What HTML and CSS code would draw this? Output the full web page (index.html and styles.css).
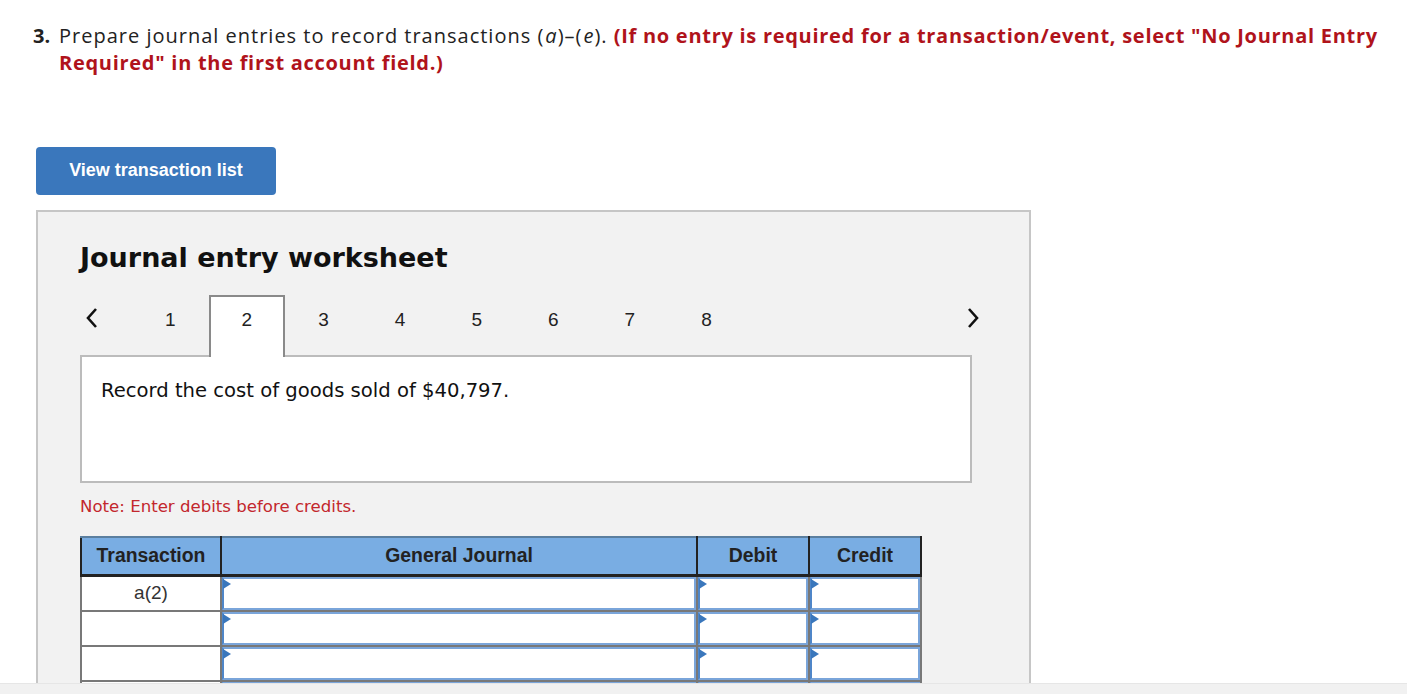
FILE: index.html
```html
<!DOCTYPE html>
<html>
<head>
<meta charset="utf-8">
<link rel="stylesheet" href="styles.css">
</head>
<body>
<div class="question">
  <span class="qnum">3.</span>
  <p class="qtext">Prepare journal entries to record transactions (<i>a</i>)–(<i>e</i>). <b class="warn">(If no entry is required for a transaction/event, select "No Journal Entry Required" in the first account field.)</b></p>
</div>

<button class="btn">View transaction list</button>

<section class="panel">
  <h2 class="panel-title">Journal entry worksheet</h2>

  <div class="tabs">
    <span class="arrow arrow-left">
      <svg width="14" height="22" viewBox="0 0 14 22"><path d="M11 2 L3 11 L11 20" fill="none" stroke="#111" stroke-width="2.6"/></svg>
    </span>
    <span class="tab">1</span>
    <span class="tab active">2</span>
    <span class="tab">3</span>
    <span class="tab">4</span>
    <span class="tab">5</span>
    <span class="tab">6</span>
    <span class="tab">7</span>
    <span class="tab">8</span>
    <span class="spacer"></span>
    <span class="arrow arrow-right">
      <svg width="14" height="22" viewBox="0 0 14 22"><path d="M3 2 L11 11 L3 20" fill="none" stroke="#111" stroke-width="2.6"/></svg>
    </span>
  </div>

  <div class="desc">Record the cost of goods sold of $40,797.</div>

  <p class="note">Note: Enter debits before credits.</p>

  <table class="journal">
    <thead>
      <tr>
        <th class="c-tr">Transaction</th>
        <th class="c-gj">General Journal</th>
        <th class="c-num">Debit</th>
        <th class="c-num">Credit</th>
      </tr>
    </thead>
    <tbody>
      <tr>
        <td class="tr">a(2)</td>
        <td class="in"><div class="box"></div></td>
        <td class="in"><div class="box"></div></td>
        <td class="in"><div class="box"></div></td>
      </tr>
      <tr>
        <td class="tr"></td>
        <td class="in"><div class="box"></div></td>
        <td class="in"><div class="box"></div></td>
        <td class="in"><div class="box"></div></td>
      </tr>
      <tr>
        <td class="tr"></td>
        <td class="in"><div class="box"></div></td>
        <td class="in"><div class="box"></div></td>
        <td class="in"><div class="box"></div></td>
      </tr>
      <tr>
        <td class="tr"></td>
        <td class="in"><div class="box"></div></td>
        <td class="in"><div class="box"></div></td>
        <td class="in"><div class="box"></div></td>
      </tr>
      <tr>
        <td class="tr"></td>
        <td class="in"><div class="box"></div></td>
        <td class="in"><div class="box"></div></td>
        <td class="in"><div class="box"></div></td>
      </tr>
    </tbody>
  </table>
</section>

<div class="bottom-strip"></div>
</body>
</html>
```

FILE: styles.css
```css
html, body {
  margin: 0;
  padding: 0;
  background: #fff;
  overflow: hidden;
}

body {
  padding: 22px 0 0 33px;
  font-family: "Open Sans", "Liberation Sans", sans-serif;
}

.question {
  display: flex;
  align-items: flex-start;
  width: 1356px;
  font-size: 20px;
  line-height: 27px;
  color: #222;
}

.qnum {
  font-weight: 700;
  width: 26px;
  flex: none;
}

.qtext {
  margin: 0;
  letter-spacing: 1px;
}

.qtext i {
  padding: 0 1px;
  letter-spacing: 0;
}

.warn {
  color: #b0131b;
  font-weight: 700;
  letter-spacing: 0.72px;
}

.btn {
  display: block;
  margin: 71px 0 0 3px;
  width: 240px;
  height: 48px;
  border: none;
  border-radius: 4px;
  background: #3a77bc;
  color: #fff;
  font-family: "Liberation Sans", Arial, sans-serif;
  font-weight: 700;
  font-size: 18px;
  padding: 0 0 2px;
}

.panel {
  margin: 15px 0 0 3px;
  width: 995px;
  box-sizing: border-box;
  border: 2px solid #c6c6c6;
  background: #f2f2f2;
  padding: 26px 57px 40px 42px;
}

.panel-title {
  margin: 0;
  font-family: "DejaVu Sans", Verdana, sans-serif;
  font-weight: 700;
  font-size: 27px;
  line-height: 40px;
  color: #111;
}

.tabs {
  display: flex;
  align-items: stretch;
  margin-top: 17px;
  height: 62px;
  position: relative;
  z-index: 1;
  margin-bottom: -2px;
}

.arrow {
  display: flex;
  align-items: center;
  justify-content: center;
  padding-bottom: 16px;
}

.arrow-left {
  width: 24px;
  margin-right: 28px;
}

.arrow-right {
  width: 24px;
  margin-right: -13px;
}

.spacer {
  flex: 1;
}

.tab {
  width: 76.6px;
  box-sizing: border-box;
  display: flex;
  align-items: center;
  justify-content: center;
  padding-bottom: 14px;
  font-family: "Liberation Sans", Arial, sans-serif;
  font-size: 19px;
  color: #222;
  border: 2px solid transparent;
  border-bottom: none;
}

.tab.active {
  background: #fff;
  border-color: #8a8a8a;
}

.desc {
  height: 128px;
  box-sizing: border-box;
  border: 2px solid #bcbcbc;
  background: #fff;
  padding: 22px 19px 18px;
  font-family: "DejaVu Sans", Verdana, sans-serif;
  font-size: 19.6px;
  color: #111;
}

.note {
  margin: 14px 0 0;
  font-family: "DejaVu Sans", Verdana, sans-serif;
  font-size: 16.6px;
  line-height: 20px;
  color: #c3272d;
}

.journal {
  margin-top: 19px;
  width: 840px;
  border-collapse: collapse;
  table-layout: fixed;
  font-family: "Liberation Sans", Arial, sans-serif;
}

.journal th {
  background: #79ade3;
  border: 2px solid #222;
  border-top-color: #5b7f9f;
  height: 34px;
  padding: 0 0 2px;
  font-size: 19.4px;
  font-weight: 700;
  color: #222;
}

.journal thead tr th {
  border-bottom-width: 3px;
}

.c-tr { width: 138px; }
.c-gj { width: 474px; }
.c-num { width: 110px; }

.journal td {
  border: 2px solid #787878;
  height: 33px;
  padding: 0;
  background: #fff;
}

.journal td.tr {
  text-align: center;
  font-size: 19px;
  color: #333;
  vertical-align: top;
  padding-top: 5px;
  height: 28px;
}

.box {
  position: relative;
  height: 33px;
  box-sizing: border-box;
  border: 2px solid #7aa5da;
  border-left-color: #4f86c8;
}

.box::before {
  content: "";
  position: absolute;
  left: -1px;
  top: 0;
  width: 0;
  height: 0;
  border-top: 5px solid transparent;
  border-bottom: 5px solid transparent;
  border-left: 8px solid #3a77bc;
}

.bottom-strip {
  position: fixed;
  left: 0;
  right: 0;
  bottom: 0;
  height: 10px;
  background: #f1f1f1;
  border-top: 1px solid #e6e6e6;
}
```
